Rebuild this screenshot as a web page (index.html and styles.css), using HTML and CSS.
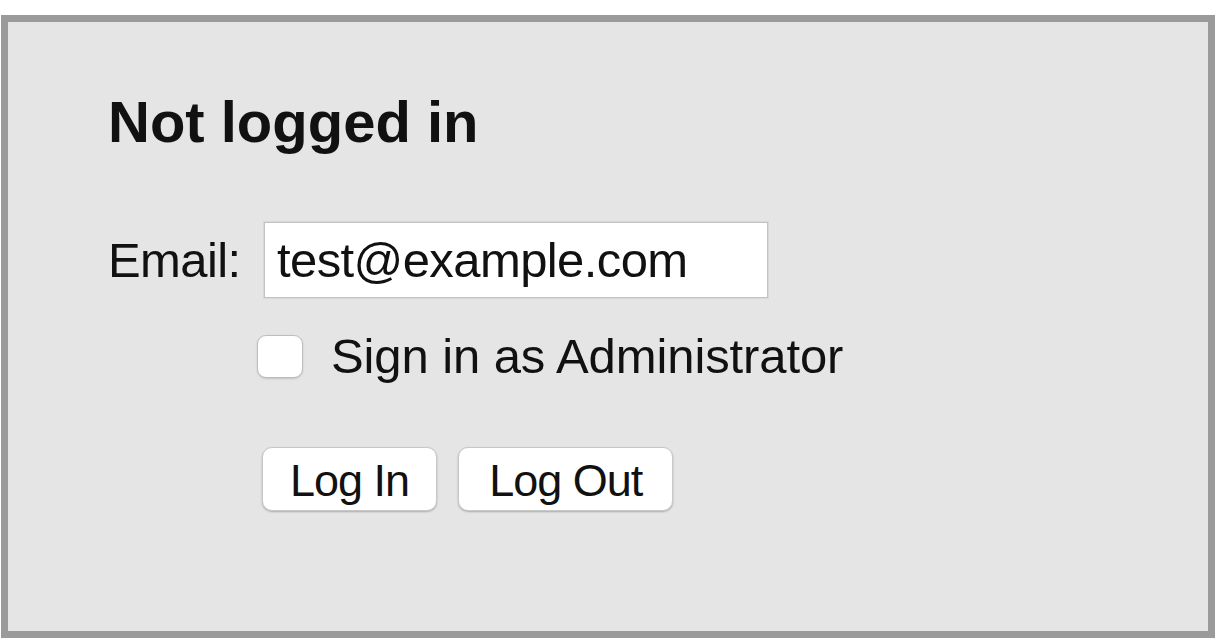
FILE: index.html
```html
<!DOCTYPE html>
<html lang="en">
<head>
    <meta charset="UTF-8">
    <meta name="viewport" content="width=device-width, initial-scale=1.0">
    <title>Login</title>
    <link rel="stylesheet" href="styles.css">
</head>
<body>
    <div class="panel">
        <h1 class="title">Not logged in</h1>

        <div class="field-row">
            <label class="field-label" for="email">Email:</label>
            <input class="text-input" id="email" type="text" value="test@example.com">
        </div>

        <label class="check-row">
            <input class="check" type="checkbox">
            <span>Sign in as Administrator</span>
        </label>

        <div class="button-row">
            <button class="btn" type="button">Log In</button>
            <button class="btn btn-wide" type="button">Log Out</button>
        </div>
    </div>
</body>
</html>
```

FILE: styles.css
```css
body {
    margin: 0;
    background: #fff;
    font-family: "Liberation Sans", Arial, sans-serif;
    color: #111;
}
.panel {
    box-sizing: border-box;
    width: 1214px;
    height: 623px;
    margin: 15px 0 0 1px;
    padding: 0 0 0 100px;
    border: 7px solid #9a9a9a;
    background: #e5e5e5;
    font-size: 49px;
    letter-spacing: -0.6px;
}
.title {
    margin: 71px 0 0 0;
    font-size: 58px;
    line-height: 58px;
    font-weight: bold;
    letter-spacing: 0;
}
.field-row {
    display: flex;
    align-items: center;
    margin-top: 71px;
}
.field-label {
    width: 156px;
    line-height: 1;
}
.text-input {
    box-sizing: border-box;
    width: 504px;
    height: 76px;
    margin: 0;
    padding: 0 12px;
    border: 1px solid #c4c4c4;
    box-shadow: 0 0 0 1px #d8d8d8;
    background: #fff;
    font: inherit;
    letter-spacing: inherit;
    color: #111;
    outline: none;
}
.check-row {
    display: flex;
    align-items: center;
    margin: 34px 0 0 149px;
    line-height: 1;
    letter-spacing: -0.1px;
}
.check {
    appearance: none;
    -webkit-appearance: none;
    box-sizing: border-box;
    width: 46px;
    height: 43px;
    margin: 0 28px 0 0;
    border: 1px solid #bdbdbd;
    border-radius: 9px;
    background: #fff;
    box-shadow: 0 1px 2px rgba(0, 0, 0, 0.15);
}
.button-row {
    display: flex;
    gap: 21px;
    margin: 66px 0 0 154px;
}
.btn {
    box-sizing: border-box;
    height: 64px;
    padding: 10px 27px 7px;
    border: 1px solid #c8c8c8;
    border-radius: 10px;
    background: #fff;
    box-shadow: 0 1px 2px rgba(0, 0, 0, 0.25);
    font-family: inherit;
    font-size: 45px;
    line-height: 45px;
    letter-spacing: -1px;
    color: #111;
}
.btn-wide {
    padding-left: 30px;
    padding-right: 30px;
}
```
